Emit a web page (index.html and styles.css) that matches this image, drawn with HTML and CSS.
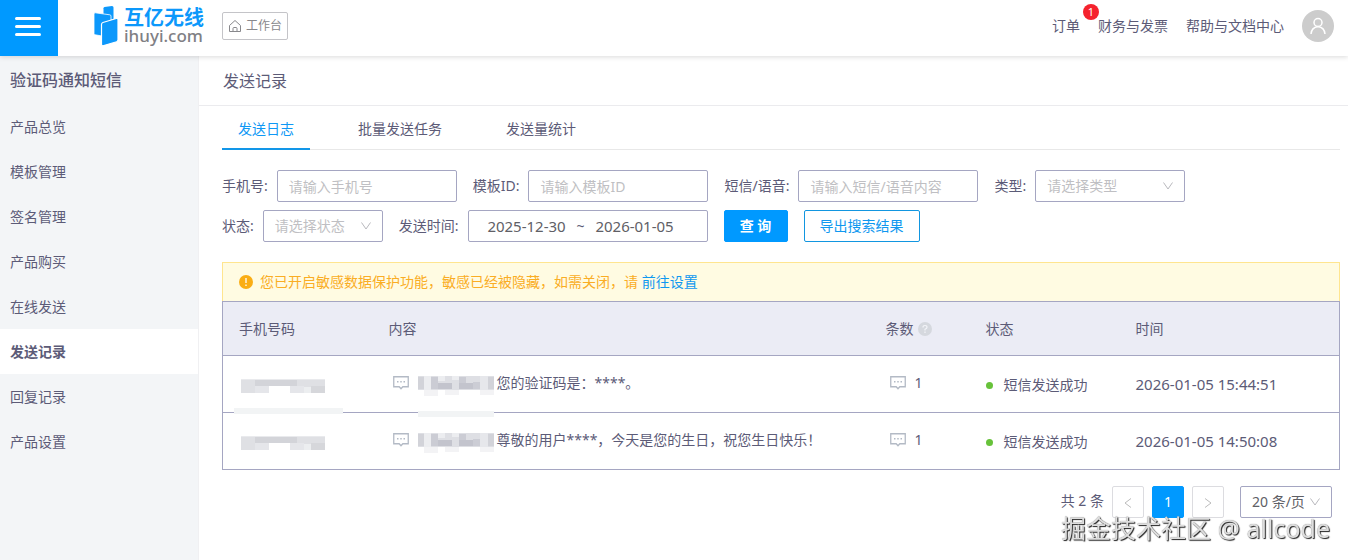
FILE: index.html
```
<!DOCTYPE html>
<html lang="zh-CN">
	<head>
		<meta charset="UTF-8">
		<title>发送记录</title>
		<link rel="stylesheet" href="styles.css">
	</head>
	<body>
		<!-- 公用图标 -->
		<svg class="sprite" width="0" height="0">
			<symbol id="down" viewBox="0 0 12 12"><path d="M1.500 2.500L6 9l4.500-6.500" fill="none" stroke="currentColor"/></symbol>
			<symbol id="msg" viewBox="0 0 16 14">
				<path d="M.75.75h14.500v10H9.800L8 12.800l-1.800-2.050H.75z" fill="none" stroke="currentColor" stroke-width="1.300"/>
				<path d="M4 5h1.500v1.500H4zM7.250 5h1.500v1.500h-1.500zM10.500 5H12v1.500h-1.500z" fill="currentColor"/>
			</symbol>
			<symbol id="mosaic-phone" viewBox="0 0 84 14">
				<rect width="84" height="14" fill="#dfe0e4"/>
				<path d="M14 1h14v6H14zM28 1h28v6H28z" fill="#d3d4d9"/>
				<path d="M0 0h84v1H0z" fill="#e9eaed"/>
				<path d="M28 7h21v7H28z" fill="#fff"/>
				<path d="M49 7h14v7H49zM14 7h14v7H14z" fill="#e5e6ea"/>
				<path d="M63 8h7v6h-7z" fill="#eceef0"/>
				<path d="M70 7h14v7H70z" fill="#d6d7db"/>
			</symbol>
			<symbol id="mosaic-sign" viewBox="0 0 76 20">
				<rect width="76" height="14" fill="#dedfe4"/>
				<path d="M0 1h6v12H0zM70 1h6v12h-6z" fill="#d2d3d9"/>
				<path d="M6 0h7v14H6zM20 0h7v5h-7zM34 0h7v4h-7z" fill="#ecedf0"/>
				<path d="M13 1h7v12h-7zM41 1h7v7h-7z" fill="#cbccd4"/>
				<path d="M20 7h14v6H20zM41 7h14v6H41z" fill="#c3c4cd"/>
				<path d="M55 6h7v7h-7z" fill="#cccdd5"/>
				<path d="M62 0h8v14h-8z" fill="#e6e7eb"/>
				<path d="M6 14h14v6H6zM27 14h14v5H27zM62 14h14v5H62z" fill="#f3f3f5"/>
			</symbol>
		</svg>

		<header class="header">
			<button class="menu-btn" type="button" aria-label="菜单">
				<svg width="26" height="19" viewBox="0 0 26 19"><path d="M1.500 1.500h23M1.500 9.500h23M1.500 17.500h23" stroke="#fff" stroke-width="3" stroke-linecap="round"/></svg>
			</button>
			<a class="logo" href="#">
				<svg width="24" height="40" viewBox="0 0 24 40" fill="#0c98fb">
					<path d="M9.500 2.200q0-1 1-1.200L18 .100q1.500 0 1.500 1.500v12h-10z"/>
					<path d="M0 8q0-1.300 1.200-1.200l14.600 2q1.200.200 1.200 1.300v5L8 30l-6.800-1.200Q0 28.600 0 27.400z" stroke="#fff" stroke-width=".8"/>
					<path d="M7.500 18.400q0-1.500 1.400-1.900l13.300-4q1.800-.500 1.800 1.300v20q0 1.400-1.400 1.900L9.800 39.600q-2.300.700-2.300-1.500z" stroke="#fff" stroke-width="1.200"/>
				</svg>
				<span class="logo-text">
					<span class="logo-cn">互亿无线</span>
					<span class="logo-en">ihuyi.com</span>
				</span>
			</a>
			<a class="workbench" href="#">
				<svg width="14" height="14" viewBox="0 0 14 14" fill="none" stroke="currentColor"><path d="M1.500 6.500L7 1.500l5.500 5v6h-11zM5 12.500V9.500q0-1 1-1h2q1 0 1 1v3"/></svg>
				工作台
			</a>
			<nav class="top-nav">
				<a class="order" href="#">订单<span class="badge">1</span></a>
				<a href="#">财务与发票</a>
				<a href="#">帮助与文档中心</a>
				<a class="avatar" href="#" aria-label="用户">
					<svg width="18" height="18" viewBox="0 0 18 18" fill="none" stroke="#fff" stroke-width="1.500"><circle cx="9" cy="5.500" r="4"/><path d="M2 17q.500-6.500 7-7.500 6.500 1 7 7.500"/></svg>
				</a>
			</nav>
		</header>

		<div class="wrap">
			<aside class="side">
				<h2 class="side-title">验证码通知短信</h2>
				<ul class="side-list">
					<li><a href="#">产品总览</a></li>
					<li><a href="#">模板管理</a></li>
					<li><a href="#">签名管理</a></li>
					<li><a href="#">产品购买</a></li>
					<li><a href="#">在线发送</a></li>
					<li><a class="on" href="#">发送记录</a></li>
					<li><a href="#">回复记录</a></li>
					<li><a href="#">产品设置</a></li>
				</ul>
			</aside>

			<main class="main">
				<h1 class="page-title">发送记录</h1>
				<div class="content">
					<nav class="tabs">
						<a class="tab on" href="#">发送日志</a>
						<a class="tab" href="#">批量发送任务</a>
						<a class="tab" href="#">发送量统计</a>
					</nav>

					<form class="filter">
						<div class="item">
							<label for="phone">手机号:</label>
							<input class="text" id="phone" type="text" placeholder="请输入手机号">
						</div>
						<div class="item">
							<label for="tpl">模板ID:</label>
							<input class="text" id="tpl" type="text" placeholder="请输入模板ID">
						</div>
						<div class="item">
							<label for="sms">短信/语音:</label>
							<input class="text" id="sms" type="text" placeholder="请输入短信/语音内容">
						</div>
						<div class="item">
							<label for="type">类型:</label>
							<div class="select select-type">
								<select id="type"><option>请选择类型</option></select>
								<svg width="12" height="12"><use href="#down"/></svg>
							</div>
						</div>
						<div class="item">
							<label for="status">状态:</label>
							<div class="select select-status">
								<select id="status"><option>请选择状态</option></select>
								<svg width="12" height="12"><use href="#down"/></svg>
							</div>
						</div>
						<div class="item">
							<label for="start">发送时间:</label>
							<div class="range">
								<input id="start" type="text" value="2025-12-30">
								<span>~</span>
								<input type="text" value="2026-01-05" aria-label="结束时间">
							</div>
						</div>
						<button class="btn btn-primary" type="button">查 询</button>
						<button class="btn btn-line" type="button">导出搜索结果</button>
					</form>

					<div class="alert">
						<svg width="14" height="14" viewBox="0 0 14 14"><circle cx="7" cy="7" r="7" fill="#faad14"/><path d="M7 3v5M7 9.500V11" stroke="#fff" stroke-width="1.300"/></svg>
						<p>您已开启敏感数据保护功能，敏感已经被隐藏，如需关闭，请 <a href="#">前往设置</a></p>
					</div>

					<table class="table">
						<thead>
							<tr>
								<th class="c-phone">手机号码</th>
								<th>内容</th>
								<th class="c-num"><div class="cell">条数<svg class="help" width="14" height="14" viewBox="0 0 14 14"><circle cx="7" cy="7" r="7" fill="#d5d8de"/><path d="M5 5.500Q5 3.500 7 3.500t2 1.800Q9 6.500 7 7.300V8.500M7 9.500V11" fill="none" stroke="#f3f4f8" stroke-width="1.200"/></svg></div></th>
								<th class="c-status">状态</th>
								<th class="c-time">时间</th>
							</tr>
						</thead>
						<tbody>
							<tr>
								<td class="masked"><svg class="mosaic" width="84" height="14"><use href="#mosaic-phone"/></svg><i class="smear smear-phone"></i></td>
								<td class="masked"><div class="cell msg"><svg class="icon" width="16" height="14"><use href="#msg"/></svg><svg class="sign" width="76" height="20"><use href="#mosaic-sign"/></svg>您的验证码是：****。</div><i class="smear smear-sign"></i></td>
								<td><div class="cell msg"><svg class="icon" width="16" height="14"><use href="#msg"/></svg>1</div></td>
								<td><div class="cell"><i class="dot"></i>短信发送成功</div></td>
								<td class="time">2026-01-05 15:44:51</td>
							</tr>
							<tr>
								<td><svg class="mosaic" width="84" height="14"><use href="#mosaic-phone"/></svg></td>
								<td><div class="cell msg"><svg class="icon" width="16" height="14"><use href="#msg"/></svg><svg class="sign" width="76" height="20"><use href="#mosaic-sign"/></svg>尊敬的用户****，今天是您的生日，祝您生日快乐！</div></td>
								<td><div class="cell msg"><svg class="icon" width="16" height="14"><use href="#msg"/></svg>1</div></td>
								<td><div class="cell"><i class="dot"></i>短信发送成功</div></td>
								<td class="time">2026-01-05 14:50:08</td>
							</tr>
						</tbody>
					</table>

					<div class="pager">
						<span class="total">共 2 条</span>
						<button class="page" type="button" aria-label="上一页"><svg width="10" height="12" viewBox="0 0 10 12"><path d="M8 2.500L2 7l6 4.500" fill="none" stroke="currentColor"/></svg></button>
						<button class="page on" type="button">1</button>
						<button class="page" type="button" aria-label="下一页"><svg width="10" height="12" viewBox="0 0 10 12"><path d="M2 2.500L8 7l-6 4.500" fill="none" stroke="currentColor"/></svg></button>
						<div class="select select-size">
							<select aria-label="每页条数"><option>20 条/页</option></select>
							<svg width="12" height="12"><use href="#down"/></svg>
						</div>
					</div>
				</div>
			</main>
		</div>

		<div class="watermark">掘金技术社区 @ allcode</div>
	</body>
</html>
```

FILE: styles.css
```
* {
	margin: 0;
	padding: 0;
	box-sizing: border-box;
}

body {
	min-height: 100vh;
	display: flex;
	flex-direction: column;
	background: #fff;
	color: #5c5b77;
	font: 14px/22px "Noto Sans", "Noto Sans CJK SC", sans-serif;
}

a {
	color: inherit;
	text-decoration: none;
}

ul {
	list-style: none;
}

button, input, select {
	font: inherit;
	color: inherit;
}

svg {
	flex: none;
	display: block;
}

.sprite {
	position: absolute;
}

/* 顶部 */
.header {
	height: 56px;
	padding-right: 14px;
	display: flex;
	align-items: center;
	position: relative;
	z-index: 2;
	background: #fff;
	box-shadow: 0 1px 5px rgba(0, 0, 0, 0.15);
}

.menu-btn {
	width: 58px;
	height: 56px;
	padding: 0 15px 4px;
	border: none;
	background: #0099ff;
}

.logo {
	margin: 0 18px 4px 36px;
	display: flex;
	align-items: center;
	gap: 6px;
}

.logo-text {
	display: flex;
	flex-direction: column;
}

.logo-cn {
	color: #0c98fb;
	font-size: 20px;
	font-weight: bold;
	line-height: 20px;
}

.logo-en {
	color: #808084;
	font-size: 17px;
	font-weight: 500;
	line-height: 16px;
}

.workbench {
	height: 28px;
	margin-bottom: 4px;
	padding: 0 5px;
	display: flex;
	align-items: center;
	gap: 4px;
	border: 1px solid #c4c4c8;
	border-radius: 2px;
	color: #88888c;
	font-size: 12px;
}

.top-nav {
	margin: 0 0 4px auto;
	display: flex;
	align-items: center;
	gap: 18px;
}

.order {
	position: relative;
}

.badge {
	width: 16px;
	height: 16px;
	position: absolute;
	left: 31px;
	top: -11px;
	border-radius: 50%;
	background: #f5222d;
	color: #fff;
	font-size: 11px;
	line-height: 16px;
	text-align: center;
}

.avatar {
	width: 32px;
	height: 32px;
	display: flex;
	align-items: center;
	justify-content: center;
	border-radius: 50%;
	background: #ccc;
}

/* 左侧菜单 */
.wrap {
	flex: 1;
	display: flex;
}

.side {
	width: 199px;
	flex: none;
	border-right: 1px solid #f0f0f2;
	background: #f3f5f7;
}

.side-title {
	padding-left: 10px;
	font-size: 16px;
	font-weight: 500;
	line-height: 48px;
}

.side-list a {
	padding-left: 10px;
	display: block;
	line-height: 45px;
}

.side-list .on {
	background: #fff;
	font-weight: bold;
}

/* 右侧内容 */
.main {
	flex: 1;
	min-width: 0;
}

.page-title {
	padding: 2px 0 0 24px;
	border-bottom: 1px solid #ebebee;
	font-size: 16px;
	font-weight: normal;
	line-height: 47px;
}

.content {
	padding: 0 8px 0 23px;
}

.tabs {
	margin-bottom: 20px;
	display: flex;
	gap: 32px;
	border-bottom: 1px solid #e8e8e8;
}

.tab {
	height: 44px;
	margin-bottom: -1px;
	padding: 0 16px;
	line-height: 46px;
}

.tab.on {
	border-bottom: 2px solid #1296e8;
	color: #0f98f5;
}

.filter {
	margin-bottom: 20px;
	display: flex;
	flex-wrap: wrap;
	gap: 8px 16px;
}

.item {
	display: flex;
	align-items: center;
}

.item label {
	margin-right: 9px;
}

.text, .range, .select select {
	height: 32px;
	border: 1px solid #a5a6c2;
	border-radius: 2px;
	background: #fff;
}

.text {
	width: 180px;
	padding: 0 11px;
}

.text::placeholder {
	color: #bfbfc3;
	opacity: 1;
}

.select {
	position: relative;
}

.select select {
	width: 100%;
	padding: 0 11px;
	appearance: none;
	color: #bfbfc3;
}

.select svg {
	position: absolute;
	right: 11px;
	top: 10px;
	color: #b9b9be;
	pointer-events: none;
}

.select-type {
	width: 150px;
}

.select-status {
	width: 120px;
}

.range {
	width: 240px;
	padding: 0 22px 0 8px;
	display: flex;
	align-items: center;
}

.range input {
	width: 0;
	flex: 1;
	border: none;
	text-align: center;
	color: #606066;
	font-size: 15px;
}

.btn {
	height: 32px;
	min-width: 64px;
	padding: 0 15px;
	border: 1px solid #0099ff;
	border-radius: 2px;
}

.btn-primary {
	background: #0099ff;
	color: #fff;
	font-weight: bold;
}

.btn-line {
	border-color: #1296e0;
	background: #fff;
	color: #0f98f0;
}

.alert {
	padding: 8px 16px;
	display: flex;
	align-items: center;
	gap: 7px;
	border: 1px solid #ffe58f;
	border-bottom: none;
	background: #fffbe2;
	color: #faad24;
}

.alert a {
	color: #0f98f0;
}

/* 记录表格 */
.table {
	width: 100%;
	table-layout: fixed;
	border: 1px solid #a5a6c2;
	border-collapse: collapse;
}

.table th, .table td {
	padding: 0 16px;
	border-bottom: 1px solid #a5a6c2;
	text-align: left;
}

.table th {
	height: 54px;
	background: #ebecf5;
	font-weight: normal;
}

.table td {
	height: 57px;
	padding-top: 2px;
}

.table .time {
	padding-top: 0;
	font-size: 15px;
}

.c-phone, .c-status {
	width: 150px;
}

.c-num {
	width: 100px;
}

.c-time {
	width: 220px;
}

.cell {
	display: flex;
	align-items: center;
	white-space: nowrap;
}

.msg {
	padding: 0 0 4px 4px;
}

.icon {
	margin-right: 9px;
	color: #b3bac5;
}

.sign {
	margin: 6px 3px 0 0;
}

.mosaic {
	margin: 2px 0 0 2px;
}

.help {
	margin-left: 4px;
}

.dot {
	width: 7px;
	height: 7px;
	margin-right: 11px;
	border-radius: 50%;
	background: #67c23a;
}

.masked {
	position: relative;
}

.smear {
	height: 6px;
	position: absolute;
	background: #f2f4f5;
}

.smear-phone {
	width: 109px;
	left: 11px;
	bottom: -2px;
}

.smear-sign {
	width: 76px;
	left: 45px;
	bottom: -5px;
}

/* 分页 */
.pager {
	padding: 16px 8px;
	display: flex;
	justify-content: flex-end;
	gap: 8px;
}

.total {
	line-height: 30px;
}

.page {
	width: 32px;
	height: 32px;
	display: flex;
	align-items: center;
	justify-content: center;
	border: 1px solid #dcdce0;
	border-radius: 2px;
	background: #fff;
	color: #bbb;
}

.page.on {
	border-color: #0099ff;
	background: #0099ff;
	color: #fff;
}

.select-size {
	width: 92px;
	margin-left: 8px;
}

.select-size select {
	color: #606066;
}

.watermark {
	position: fixed;
	right: 18px;
	bottom: 14px;
	z-index: 3;
	color: #dedede;
	font-size: 25px;
	line-height: 36px;
	text-shadow: 1px 1px 1px #222, 0 0 1px #888;
	pointer-events: none;
}
```
